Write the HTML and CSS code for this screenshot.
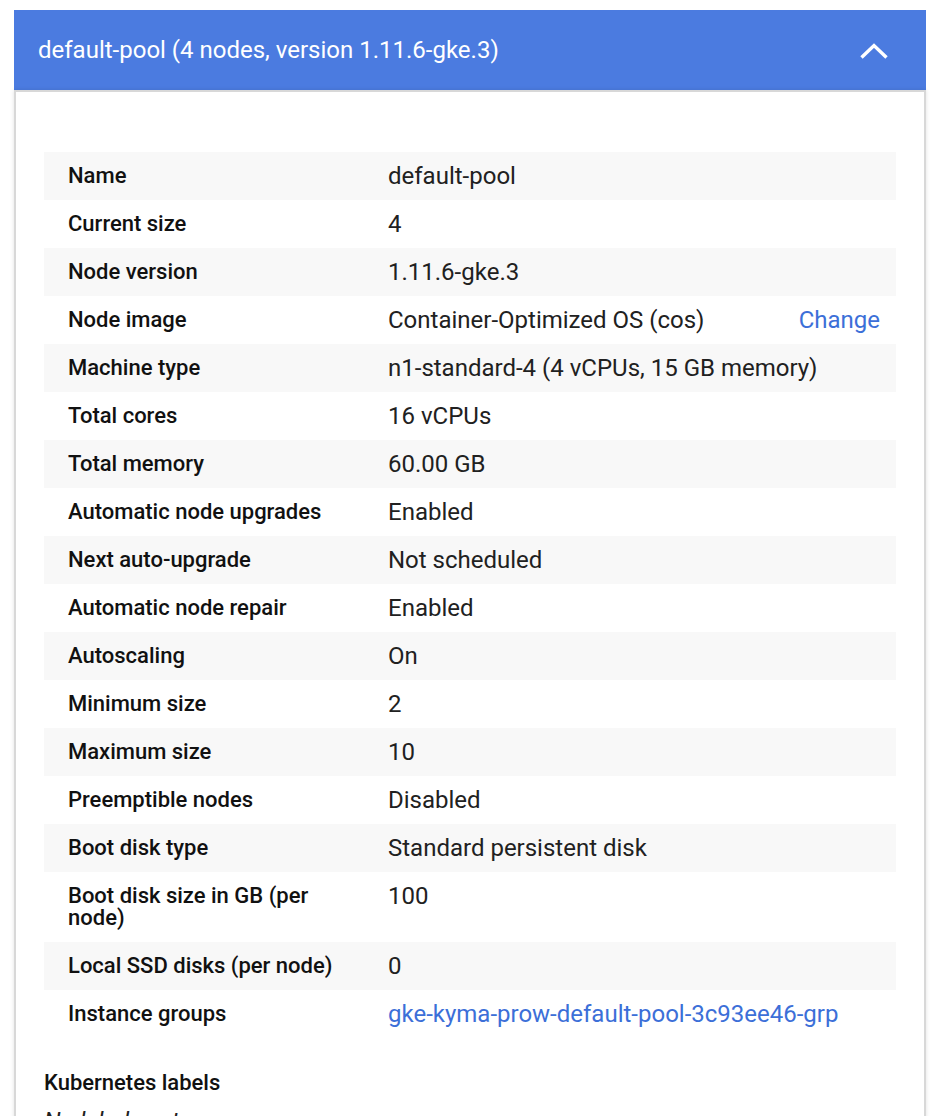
FILE: index.html
```html
<!DOCTYPE html>
<html>
<head>
<meta charset="utf-8">
<link rel="stylesheet" href="styles.css">
</head>
<body>
<div class="panel">
  <div class="panel-header">
    <span class="panel-title">default-pool (4 nodes, version 1.11.6-gke.3)</span>
    <svg class="chevron" width="28" height="18" viewBox="0 0 28 18"><polyline points="1.5,15.5 14,3.5 26.5,15.5" fill="none" stroke="#fff" stroke-width="3.4" stroke-linecap="butt" stroke-linejoin="miter"/></svg>
  </div>
  <div class="panel-body">
    <div class="props">
      <div class="row"><div class="label">Name</div><div class="value">default-pool</div></div>
      <div class="row"><div class="label">Current size</div><div class="value">4</div></div>
      <div class="row"><div class="label">Node version</div><div class="value">1.11.6-gke.3</div></div>
      <div class="row"><div class="label">Node image</div><div class="value split"><span>Container-Optimized OS (cos)</span><a class="link">Change</a></div></div>
      <div class="row"><div class="label">Machine type</div><div class="value">n1-standard-4 (4 vCPUs, 15 GB memory)</div></div>
      <div class="row"><div class="label">Total cores</div><div class="value">16 vCPUs</div></div>
      <div class="row"><div class="label">Total memory</div><div class="value">60.00 GB</div></div>
      <div class="row"><div class="label">Automatic node upgrades</div><div class="value">Enabled</div></div>
      <div class="row"><div class="label">Next auto-upgrade</div><div class="value">Not scheduled</div></div>
      <div class="row"><div class="label">Automatic node repair</div><div class="value">Enabled</div></div>
      <div class="row"><div class="label">Autoscaling</div><div class="value">On</div></div>
      <div class="row"><div class="label">Minimum size</div><div class="value">2</div></div>
      <div class="row"><div class="label">Maximum size</div><div class="value">10</div></div>
      <div class="row"><div class="label">Preemptible nodes</div><div class="value">Disabled</div></div>
      <div class="row"><div class="label">Boot disk type</div><div class="value">Standard persistent disk</div></div>
      <div class="row"><div class="label">Boot disk size in GB (per node)</div><div class="value">100</div></div>
      <div class="row"><div class="label">Local SSD disks (per node)</div><div class="value">0</div></div>
      <div class="row"><div class="label">Instance groups</div><div class="value"><a class="link">gke-kyma-prow-default-pool-3c93ee46-grp</a></div></div>
    </div>
    <h3 class="section-title">Kubernetes labels</h3>
    <p class="empty">No labels set</p>
  </div>
</div>
</body>
</html>
```
FILE: styles.css
```css
html, body {
  margin: 0;
  padding: 0;
  background: #fff;
}
body {
  font-family: Roboto, "Liberation Sans", sans-serif;
  color: #212121;
}
.panel {
  margin: 10px 14px 0 14px;
  width: 912px;
}
.panel-header {
  background: #4b7be0;
  height: 80px;
  display: flex;
  align-items: center;
  justify-content: space-between;
  padding: 0 38px 0 24px;
  box-sizing: border-box;
}
.panel-title {
  color: #fff;
  font-size: 24px;
  line-height: 28px;
}
.chevron {
  display: block;
  margin-top: 1px;
}
.panel-body {
  border: 2px solid #d8d8d8;
  border-bottom: none;
  box-shadow: 0 0 4px rgba(0,0,0,0.12);
  padding: 60px 28px 0 28px;
  min-height: 1100px;
}
.props {
  display: flex;
  flex-direction: column;
}
.row {
  display: grid;
  grid-template-columns: 344px 1fr;
}
.row:nth-child(odd) {
  background: #f8f8f8;
}
.label {
  padding: 13px 24px 13px 24px;
  font-size: 22px;
  line-height: 22px;
  font-weight: 500;
  color: #111;
}
.value {
  padding: 12px 16px 12px 0;
  font-size: 24px;
  line-height: 24px;
  color: #212121;
}
.split {
  display: flex;
  justify-content: space-between;
}
.link {
  color: #3c6fd8;
  text-decoration: none;
  cursor: pointer;
}
.section-title {
  margin: 33px 0 0 0;
  font-size: 22px;
  line-height: 24px;
  font-weight: 500;
  color: #111;
}
.empty {
  margin: 14px 0 0 0;
  font-size: 24px;
  line-height: 24px;
  font-style: italic;
  color: #212121;
}
```
